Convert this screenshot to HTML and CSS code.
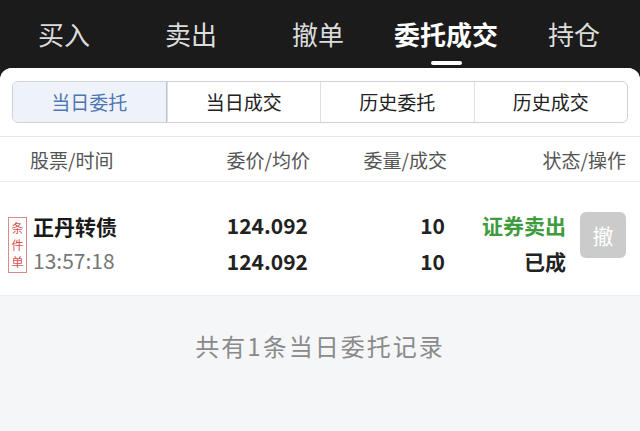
FILE: index.html
```html
<!DOCTYPE html>
<html>
<head>
    <title>委托成交</title>
    <link rel="stylesheet" href="styles.css">
</head>
<body>
    <div class="topbar">
        <div class="tab">买入</div>
        <div class="tab">卖出</div>
        <div class="tab">撤单</div>
        <div class="tab active">委托成交</div>
        <div class="tab">持仓</div>
    </div>
    <div class="panel">
        <div class="seg-wrap">
            <div class="segments">
                <div class="seg on">当日委托</div>
                <div class="seg">当日成交</div>
                <div class="seg">历史委托</div>
                <div class="seg">历史成交</div>
            </div>
        </div>
        <div class="head">
            <div class="c1">股票/时间</div>
            <div class="c2">委价/均价</div>
            <div class="c3">委量/成交</div>
            <div class="c4">状态/操作</div>
        </div>
        <div class="row">
            <div class="c1 name-col">
                <div class="tag">
                    <span>条</span>
                    <span>件</span>
                    <span>单</span>
                </div>
                <div>
                    <div class="name">正丹转债</div>
                    <div class="time">13:57:18</div>
                </div>
            </div>
            <div class="c2 num">
                <div>124.092</div>
                <div>124.092</div>
            </div>
            <div class="c3 num">
                <div>10</div>
                <div>10</div>
            </div>
            <div class="c4 status-col">
                <div class="status">
                    <div class="sell">证券卖出</div>
                    <div>已成</div>
                </div>
                <div class="cancel">撤</div>
            </div>
        </div>
        <div class="footer">共有1条当日委托记录</div>
    </div>
</body>
</html>
```

FILE: styles.css
```css
body {
    margin: 0;
    font-family: "Noto Sans CJK SC", "Noto Sans", sans-serif;
    background-color: #1b1b1b;
    width: 640px;
    height: 431px;
    overflow: hidden;
}
.topbar {
    height: 68px;
    display: flex;
    align-items: flex-start;
    padding-left: 38px;
    box-sizing: border-box;
}
.tab {
    flex-shrink: 0;
    white-space: nowrap;
    font-size: 26px;
    line-height: 30px;
    padding-top: 19px;
    color: #dcdcdc;
    margin-right: 75px;
    position: relative;
}
.tab:nth-child(3),
.tab:nth-child(4) {
    margin-right: 50px;
}
.tab.active {
    color: #fff;
    font-weight: bold;
}
.tab.active::after {
    content: "";
    position: absolute;
    left: 37px;
    top: 61px;
    width: 31px;
    height: 4px;
    border-radius: 2px;
    background: #fff;
}
.panel {
    background: #f5f6f8;
    border-radius: 12px 12px 0 0;
    height: 363px;
    overflow: hidden;
}
.seg-wrap {
    background: #fff;
    padding: 13px 12px 13px 12px;
    border-bottom: 1px solid #e8e8e8;
}
.segments {
    display: flex;
    border: 1px solid #cdd1d8;
    border-radius: 6px;
    overflow: hidden;
    height: 40px;
}
.seg {
    flex: 1;
    text-align: center;
    font-size: 19px;
    line-height: 40px;
    color: #222;
    border-left: 1px solid #dcdfe4;
}
.seg:first-child {
    border-left: none;
}
.seg.on {
    background: #eef3fa;
    color: #4e75b4;
    border-right: 1px solid #b9c4d6;
}
.head, .row {
    display: grid;
    grid-template-columns: 172px 130px 137px 1fr;
    padding: 0 14px 0 8px;
    background: #fff;
}
.head {
    height: 44px;
    align-items: center;
    font-size: 19px;
    color: #555;
    border-bottom: 1px solid #ececec;
}
.head .c1 {
    padding-left: 22px;
}
.c2, .c3, .c4 {
    text-align: right;
}
.row {
    height: 114px;
    box-sizing: border-box;
    padding-top: 8px;
    align-items: center;
    border-bottom: 1px solid #eeeeee;
}
.name-col {
    display: flex;
    align-items: center;
    gap: 6px;
}
.tag {
    width: 17px;
    border: 1px solid #d98a8a;
    color: #d9534f;
    font-size: 12px;
    line-height: 17px;
    text-align: center;
    padding: 1px 0 2px;
    margin-top: 4px;
    display: flex;
    flex-direction: column;
}
.name {
    font-size: 21px;
    font-weight: bold;
    color: #1a1a1a;
    line-height: 34px;
}
.time {
    font-size: 21px;
    color: #777;
    line-height: 34px;
}
.num {
    font-size: 21px;
    font-weight: bold;
    color: #222;
    line-height: 36px;
    padding-right: 2px;
}
.status-col {
    display: flex;
    justify-content: flex-end;
    align-items: center;
    gap: 14px;
}
.status {
    text-align: right;
    font-size: 21px;
    font-weight: bold;
    color: #222;
    line-height: 36px;
}
.sell {
    color: #3e9b3e;
}
.cancel {
    width: 46px;
    height: 46px;
    line-height: 46px;
    border-radius: 6px;
    background: #cbcbcb;
    color: #fff;
    font-size: 21px;
    text-align: center;
    margin-top: -16px;
}
.footer {
    text-align: center;
    font-size: 24px;
    letter-spacing: 2px;
    color: #8a8a8a;
    padding-top: 32px;
}
```
